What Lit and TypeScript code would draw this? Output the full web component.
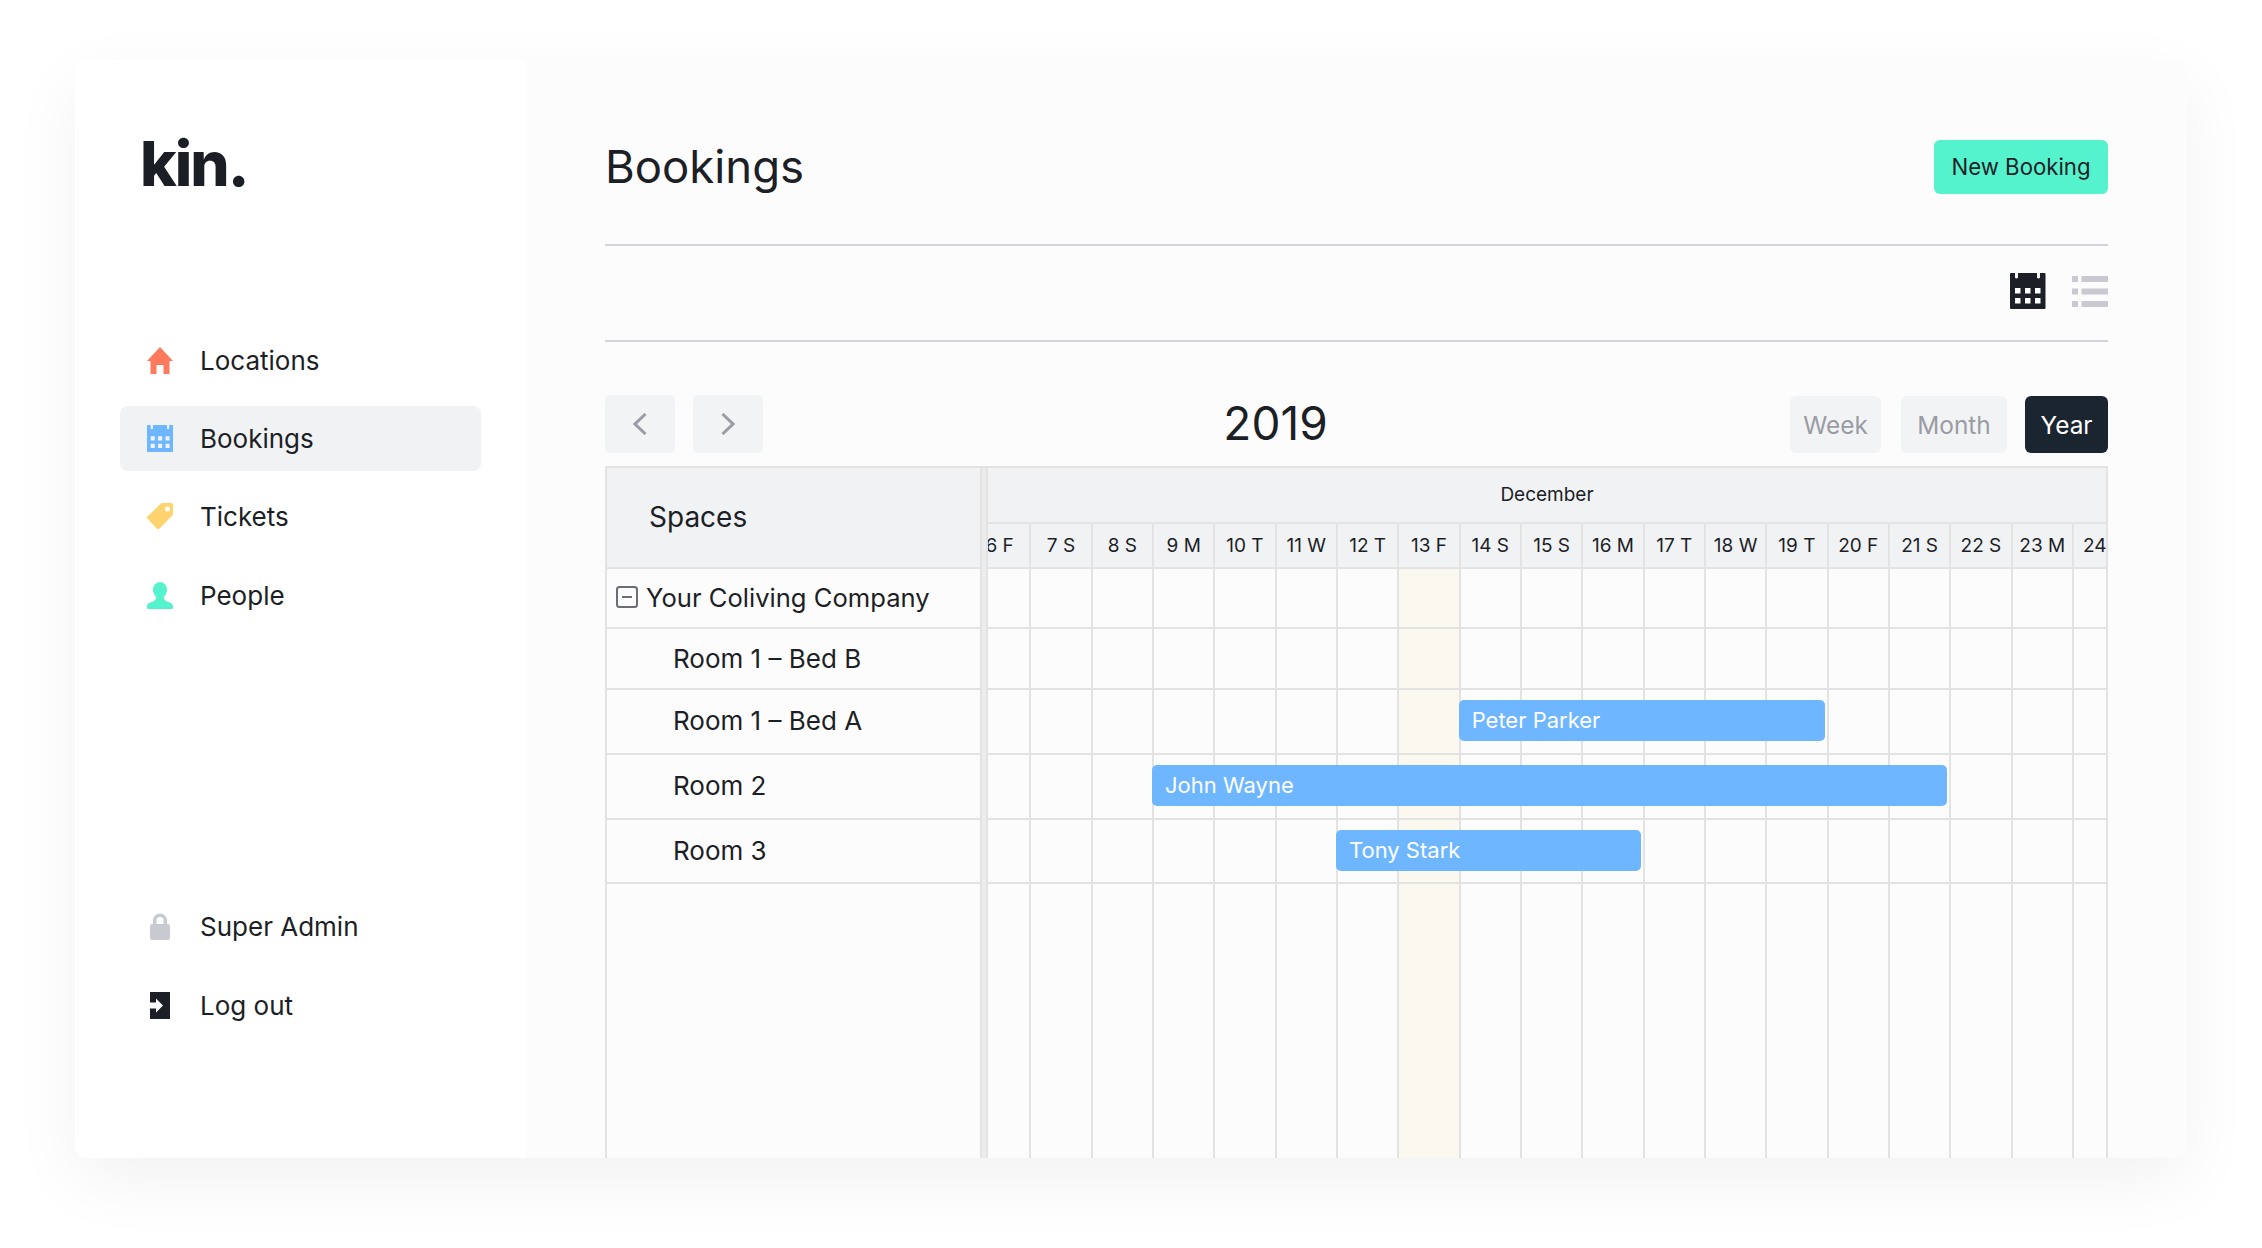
import { LitElement, html, css, svg } from 'lit';
import { customElement } from 'lit/decorators.js';
import { classMap } from 'lit/directives/class-map.js';

const COL = 61.33;
const FIRST_OFFSET = -20;

const days = ['6 F', '7 S', '8 S', '9 M', '10 T', '11 W', '12 T', '13 F', '14 S', '15 S', '16 M', '17 T', '18 W', '19 T', '20 F', '21 S', '22 S', '23 M', '24 T'];
const todayIndex = 7;

const rows = [
  { name: 'Your Coliving Company', height: 60, group: true },
  { name: 'Room 1 – Bed B', height: 61 },
  { name: 'Room 1 – Bed A', height: 65, bar: { label: 'Peter Parker', start: 8, span: 6 } },
  { name: 'Room 2', height: 65, bar: { label: 'John Wayne', start: 3, span: 13 } },
  { name: 'Room 3', height: 64, bar: { label: 'Tony Stark', start: 6, span: 5 } },
];

const calendarPath = 'M0 1a1 1 0 0 1 1-1h4v4.5a1.6 1.6 0 0 0 3 0V0h19v4.5a1.6 1.6 0 0 0 3 0V0h4.5a1 1 0 0 1 1 1v34a1 1 0 0 1-1 1H1a1 1 0 0 1-1-1ZM5 15v5.5h5.5V15Zm10 0v5.5h5.5V15Zm10 0v5.5h5.5V15ZM5 25v5.5h5.5V25Zm10 0v5.5h5.5V25Zm10 0v5.5h5.5V25Z';

const icons = {
  home: svg`<path d="M13 0 26 14H22.5V27H16.5V18H9.5V27H3.5V14H0Z"/>`,
  calendar: svg`<g transform="scale(.74 .75)"><path fill-rule="evenodd" d="${calendarPath}"/></g>`,
  tag: svg`<path fill-rule="evenodd" d="M15.5 0H24a2 2 0 0 1 2 2V11a2 2 0 0 1-.7 1.4L12.5 25.6a2 2 0 0 1-2.8 0L.7 16a2 2 0 0 1 0-2.8L14 .6a2 2 0 0 1 1.5-.6ZM20.5 3.5a2.5 2.5 0 1 0 0 5 2.5 2.5 0 0 0 0-5Z"/>`,
  person: svg`<ellipse cx="13" cy="8" rx="7" ry="8"/><path d="M9 14h8c0 3 .6 4.300 2 5 3 1.400 7 2 7 5.500V26a1 1 0 0 1-1 1H1a1 1 0 0 1-1-1v-1.500C0 21 4 20.400 7 19c1.400-.7 2-2 2-5Z"/>`,
};

@customElement('app-root')
export class AppRoot extends LitElement {
  static styles = css`
    :host {
      display: block;
      width: 2262px;
      height: 1248px;
      box-sizing: border-box;
      padding: 60px 75px 90px;
      background: #fff;
      font-family: Inter, "Noto Sans", sans-serif;
      color: #1c1f26;
    }
    .window {
      display: flex;
      height: 100%;
      border-radius: 12px;
      background: #fcfcfc;
      box-shadow: 0 22px 70px rgba(0, 0, 0, 0.055);
      overflow: hidden;
    }

    .sidebar {
      width: 451px;
      flex: none;
      box-sizing: border-box;
      display: flex;
      flex-direction: column;
      background: #fff;
      padding: 0 45px 120px;
    }
    .logo {
      height: 268px;
      padding: 66px 0 0 20px;
      box-sizing: border-box;
      font-size: 62px;
      line-height: 75px;
      font-weight: 800;
      letter-spacing: -2px;
      color: #1b1e25;
    }
    .nav {
      display: flex;
      flex-direction: column;
      gap: 13px;
    }
    .nav a:nth-child(4) {
      margin-top: 1px;
    }
    .nav.bottom {
      margin-top: auto;
      gap: 14px;
    }
    .nav a {
      display: flex;
      align-items: center;
      height: 65px;
      border-radius: 8px;
      font-size: 26px;
      color: inherit;
      text-decoration: none;
    }
    .nav a.active {
      background: #f1f2f4;
    }
    .nav .slot {
      width: 26px;
      margin: 0 27px;
      display: flex;
      justify-content: center;
    }
    .orange { color: #ff7a5c; }
    .blue { color: #6eb6ff; }
    .yellow { color: #ffd36e; }
    .green { color: #55f2ce; }
    .grey { color: #c9cad1; }
    svg { display: block; fill: currentColor; }

    .main {
      flex: 1;
      min-width: 0;
      display: flex;
      flex-direction: column;
      padding: 80px 79px 0;
    }
    .head {
      display: flex;
      justify-content: space-between;
      align-items: center;
      height: 54px;
      padding-bottom: 50px;
      border-bottom: 2px solid #d2d2d9;
    }
    h1 {
      margin: 0 0 2px;
      font-size: 45.5px;
      font-weight: 400;
    }
    button {
      border: 0;
      font: inherit;
      color: inherit;
      padding: 0;
    }
    .primary {
      width: 174px;
      height: 54px;
      padding-bottom: 2px;
      border-radius: 6px;
      background: #55f2ce;
      font-size: 22.2px;
    }
    .views {
      display: flex;
      justify-content: flex-end;
      align-items: center;
      gap: 26px;
      height: 90px;
      padding-bottom: 4px;
      border-bottom: 2px solid #d2d2d9;
    }
    .controls {
      display: flex;
      justify-content: space-between;
      align-items: center;
      margin: 53px 0 13px;
      height: 58px;
    }
    .pager {
      display: flex;
      gap: 18px;
    }
    .pager button {
      width: 70px;
      height: 58px;
      border-radius: 6px;
      background: #f2f3f5;
      color: #9a9ca3;
      display: flex;
      align-items: center;
      justify-content: center;
    }
    .pager svg {
      fill: none;
      stroke: currentColor;
      stroke-width: 3;
    }
    .year {
      font-size: 46px;
      font-weight: 400;
      padding: 0 2px 2px 0;
    }
    .ranges {
      display: flex;
      align-self: flex-end;
      gap: 18px;
    }
    .ranges button {
      height: 57px;
      border-radius: 6px;
      background: #f2f3f5;
      color: #9a9ca3;
      font-size: 24.4px;
    }
    .ranges button.on {
      background: #1b2530;
      color: #fff;
    }
    .week { width: 91px; margin-right: 2px; }
    .month-btn { width: 106px; }
    .year-btn { width: 83px; }

    .table {
      flex: 1;
      min-height: 0;
      display: flex;
      border: 2px solid #e3e3e3;
      border-bottom: 0;
      overflow: hidden;
    }
    .spaces {
      width: 373px;
      flex: none;
    }
    .splitter {
      width: 4px;
      flex: none;
      background: #ececec;
      border-left: 2px solid #e3e3e3;
      border-right: 2px solid #e3e3e3;
    }
    .spaces-head {
      height: 101px;
      box-sizing: border-box;
      display: flex;
      align-items: center;
      padding: 0 0 2px 42px;
      background: #f1f2f4;
      border-bottom: 2px solid #e3e3e3;
      font-size: 28px;
    }
    .space {
      box-sizing: border-box;
      display: flex;
      align-items: center;
      gap: 8px;
      padding: 0 0 2px 66px;
      border-bottom: 2px solid #e3e3e3;
      font-size: 26px;
    }
    .space:nth-child(3) {
      padding-bottom: 0;
    }
    .space.group {
      padding-left: 9px;
      font-size: 25.6px;
    }
    .space svg {
      fill: none;
      stroke: #6b6e75;
      stroke-width: 2;
    }

    .timeline {
      flex: 1;
      min-width: 0;
      display: flex;
      flex-direction: column;
      overflow: hidden;
    }
    .month {
      height: 56px;
      flex: none;
      box-sizing: border-box;
      display: flex;
      align-items: center;
      justify-content: center;
      padding-bottom: 2px;
      background: #f1f2f4;
      border-bottom: 2px solid #e3e3e3;
      font-size: 19px;
    }
    .track {
      display: flex;
      position: relative;
      flex: none;
      border-bottom: 2px solid #e3e3e3;
      box-sizing: border-box;
    }
    .track.days {
      height: 45px;
      background: #f1f2f4;
    }
    .track.fill {
      flex: 1;
      border-bottom: 0;
    }
    .cells {
      display: flex;
      margin-left: -18px;
      flex: none;
    }
    .cell {
      width: 61.33px;
      flex: none;
      box-sizing: border-box;
      display: flex;
      align-items: center;
      justify-content: center;
      border-right: 2px solid #e3e3e3;
      font-size: 19px;
      white-space: nowrap;
    }
    .cell.today {
      background: #faf8ef;
    }
    .bar {
      position: absolute;
      top: 10px;
      height: 41px;
      box-sizing: border-box;
      padding: 0 0 2px 13px;
      display: flex;
      align-items: center;
      border-radius: 5px;
      background: #6eb6ff;
      color: #fff;
      font-size: 22px;
    }
  `;

  private navItem(label: string, icon: unknown, colour: string, active = false) {
    return html`<a href="#" class=${classMap({ active })}>
      <span class="slot ${colour}">${icon}</span>${label}
    </a>`;
  }

  private icon(name: keyof typeof icons) {
    return html`<svg width="26" height="27" viewBox="0 0 26 27">${icons[name]}</svg>`;
  }

  private cells(highlight = true, labels = false) {
    return html`<div class="cells">
      ${days.map(
        (d, i) => html`<div class=${classMap({ cell: true, today: highlight && i === todayIndex })}>${labels ? d : ''}</div>`
      )}
    </div>`;
  }

  render() {
    return html`
      <div class="window">
        <aside class="sidebar">
          <div class="logo">kin.</div>
          <nav class="nav">
            ${this.navItem('Locations', this.icon('home'), 'orange')}
            ${this.navItem('Bookings', this.icon('calendar'), 'blue', true)}
            ${this.navItem('Tickets', this.icon('tag'), 'yellow')}
            ${this.navItem('People', this.icon('person'), 'green')}
          </nav>
          <nav class="nav bottom">
            ${this.navItem(
              'Super Admin',
              html`<svg width="20" height="27" viewBox="0 0 20 27"><path fill="none" stroke="currentColor" stroke-width="3.400" d="M4.700 13V7.500a5.300 5.300 0 0 1 10.600 0V13"/><rect y="11" width="20" height="16" rx="2"/></svg>`,
              'grey'
            )}
            ${this.navItem(
              'Log out',
              html`<svg width="20" height="27" viewBox="0 0 20 27"><path d="M0 0H20V27H0V16.500H6V20.500L13 13.500 6 6.500V10.500H0Z"/></svg>`,
              ''
            )}
          </nav>
        </aside>

        <main class="main">
          <header class="head">
            <h1>Bookings</h1>
            <button class="primary">New Booking</button>
          </header>

          <div class="views">
            <svg width="36" height="36" viewBox="0 0 36 36"><path fill-rule="evenodd" d="${calendarPath}"/></svg>
            <svg class="grey" width="36" height="31" viewBox="0 0 36 31">
              <rect width="6" height="6" /><rect x="9.500" width="26.500" height="6" />
              <rect y="12.500" width="6" height="6" /><rect x="9.500" y="12.500" width="26.500" height="6" />
              <rect y="25" width="6" height="6" /><rect x="9.500" y="25" width="26.500" height="6" />
            </svg>
          </div>

          <div class="controls">
            <div class="pager">
              <button aria-label="Previous"><svg width="14" height="22" viewBox="0 0 14 22"><path d="M12.500 1 2 11 12.500 21" /></svg></button>
              <button aria-label="Next"><svg width="14" height="22" viewBox="0 0 14 22"><path d="M1.500 1 12 11 1.500 21" /></svg></button>
            </div>
            <div class="year">2019</div>
            <div class="ranges">
              <button class="week">Week</button>
              <button class="month-btn">Month</button>
              <button class="year-btn on">Year</button>
            </div>
          </div>

          <section class="table">
            <div class="spaces">
              <div class="spaces-head">Spaces</div>
              ${rows.map(
                r => html`<div class=${classMap({ space: true, group: !!r.group })} style="height:${r.height}px">
                  ${r.group
                    ? html`<svg width="22" height="22" viewBox="0 0 22 22"><rect x="1" y="1" width="20" height="20" rx="2.500" /><path d="M6 11H16" /></svg>`
                    : ''}
                  ${r.name}
                </div>`
              )}
            </div>
            <div class="splitter"></div>
            <div class="timeline">
              <div class="month">December</div>
              <div class="track days">${this.cells(false, true)}</div>
              ${rows.map(
                r => html`<div class="track" style="height:${r.height}px">
                  ${this.cells()}
                  ${r.bar
                    ? html`<div
                        class="bar"
                        style="left:${r.bar.start * COL + FIRST_OFFSET}px;width:${r.bar.span * COL - 2}px"
                      >${r.bar.label}</div>`
                    : ''}
                </div>`
              )}
              <div class="track fill">${this.cells()}</div>
            </div>
          </section>
        </main>
      </div>
    `;
  }
}
